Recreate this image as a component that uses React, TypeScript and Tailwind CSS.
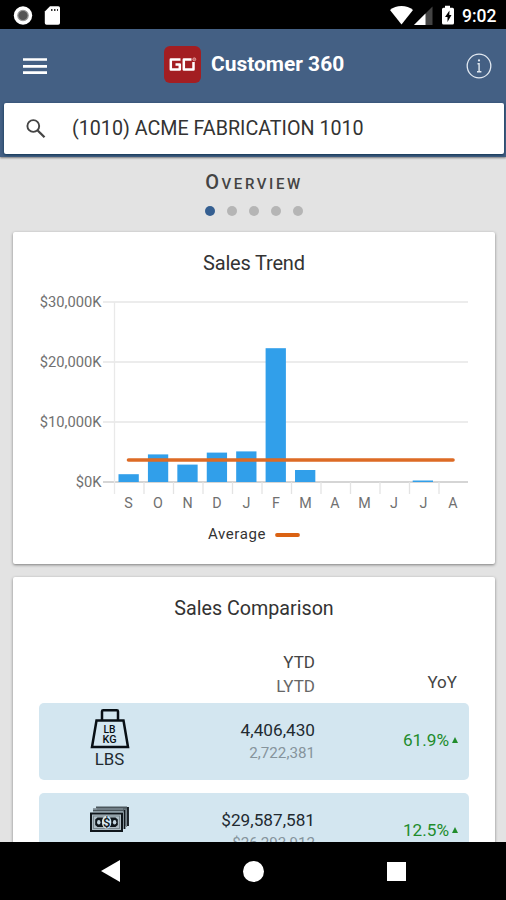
import React from 'react';

const months = ['S', 'O', 'N', 'D', 'J', 'F', 'M', 'A', 'M', 'J', 'J', 'A'];
const values = [1300, 4600, 2900, 4900, 5100, 22300, 2000, 0, 0, 0, 250, 0];
const ticks = [30000, 20000, 10000, 0];

const BAND = 29.5;
const LEFT = 101.5;
const BASE = 250;
const yFor = (v: number) => BASE - v * 0.006;

function StatusBar() {
  return (
    <div className="flex h-[29px] shrink-0 items-center bg-black pl-[13px] pr-[9px] text-white">
      <svg width="20" height="20" viewBox="0 0 20 20">
        <circle cx="10" cy="10.5" r="9.2" fill="#fff" />
        <circle cx="10" cy="10.5" r="5.2" fill="#555" stroke="#999" strokeWidth="1.2" />
      </svg>
      <svg className="ml-[11px]" width="17" height="20" viewBox="0 0 17 20">
        <path d="M6 1.200H14.300Q16 1.200 16 3V18Q16 19.800 14.200 19.800H2.600Q.8 19.800 .8 18V6.500Z" fill="#fff" />
        <path d="M7 5h1.500M10 5h1.500M13 5h1" stroke="#333" strokeWidth="2" />
      </svg>
      <svg className="ml-auto" width="23" height="20" viewBox="0 0 23 20">
        <path d="M0 5C6-.3 17-.3 23 5L11.500 19.500Z" fill="#fff" />
      </svg>
      <svg className="ml-[1px]" width="19" height="20" viewBox="0 0 19 20">
        <path d="M0 20L18.500 1.500V20Z" fill="#444" />
        <path d="M0 20L11.500 8.500V20Z" fill="#fff" />
      </svg>
      <svg className="ml-[8px]" width="14" height="20" viewBox="0 0 14 20">
        <path d="M4 .8h5v2h2.500Q13 2.800 13 4.300V18q0 1.500-1.500 1.500h-9Q1 19.500 1 18V4.300Q1 2.800 2.500 2.800H4Z" fill="#fff" />
        <path d="M8.500 5.500L4 12h2.500v5L10.500 10H8.300Z" fill="#000" />
      </svg>
      <span className="ml-[7px] mt-[2px] w-[35px] whitespace-nowrap text-[17.500px] font-medium leading-5">9:02</span>
    </div>
  );
}

function Header() {
  return (
    <header className="h-[128px] shrink-0 bg-[#446084] px-[3px] shadow-[0_1px_2px_rgba(0,0,0,0.45)]">
      <div className="flex h-[74px] items-center pl-[20px] pr-[11px]">
        <svg width="24" height="18" viewBox="0 0 24 18">
          <path d="M0 2.500h24M0 9.300h24M0 15.700h24" stroke="#fff" strokeWidth="2.700" />
        </svg>
        <div className="ml-[117px] mb-[3px] flex items-center">
          <svg width="37" height="37" viewBox="0 0 37 37">
            <rect width="37" height="37" rx="6" fill="#a31e22" />
            <path d="M16.500 13.400H6.800V23.600H15.800V18.500H11.500M27.500 13.400H19.800V23.600H29.500V16" fill="none" stroke="#fff" strokeWidth="2.500" strokeLinejoin="round" />
            <circle cx="30.300" cy="13.300" r="1.500" fill="#c66" stroke="#e3a6a6" strokeWidth=".8" />
          </svg>
          <h1 className="mb-[2px] ml-[10px] whitespace-nowrap text-[20.950px] font-bold leading-6 text-white">Customer 360</h1>
        </div>
        <svg className="ml-auto" width="26" height="26" viewBox="0 0 26 26" fill="none" stroke="#e2e9f1">
          <circle cx="13" cy="13" r="11.800" strokeWidth="1.300" />
          <path d="M11.500 10.700h1.600v8M11 18.700h4.400" strokeWidth="1.400" />
          <circle cx="13" cy="7.400" r="1.100" fill="#e2e9f1" stroke="none" />
        </svg>
      </div>
      <div className="-mr-px ml-px flex h-[51px] items-center rounded-[2px] bg-white pl-[21px] shadow-[0_1px_3px_#0b3150]">
        <svg width="22" height="22" viewBox="0 0 22 22" fill="none" stroke="#444">
          <circle cx="8.300" cy="8" r="5.900" strokeWidth="1.900" />
          <path d="M12.700 12.500L19.500 19.300" strokeWidth="2.300" />
        </svg>
        <span className="ml-[25px] whitespace-nowrap text-[19.700px] leading-6 text-[#333]">(1010) ACME FABRICATION 1010</span>
      </div>
    </header>
  );
}

function TrendChart() {
  return (
    <svg className="block" width="482" height="332" viewBox="0 0 482 332" fontFamily="Roboto, sans-serif">
      <text x="241" y="38" textAnchor="middle" fontSize="20" textLength="102" fill="#333">Sales Trend</text>
      {ticks.map((t) => (
        <g key={t}>
          <path d={`M90 ${yFor(t)}H455`} stroke={t === 0 ? '#d5d5d5' : '#ececec'} strokeWidth="2" />
          <text x="88.500" y={yFor(t) + 4.500} textAnchor="end" fontSize="14.700" fill="#707070">{`$${t ? t.toLocaleString('en-US') : 0}K`}</text>
        </g>
      ))}
      <path d="M101.500 70V262" stroke="#e9e9e9" strokeWidth="1.300" />
      {months.map((m, i) => (
        <g key={i}>
          {i > 0 && <path d={`M${LEFT + i * BAND} 250v12`} stroke="#e3e3e3" strokeWidth="1.300" />}
          <rect x={LEFT + i * BAND + 4 - i * 0.08} y={yFor(values[i])} width="20.300" height={BASE - yFor(values[i])} fill="#319fea" />
          <text x={LEFT + i * BAND + 14} y="275.500" textAnchor="middle" fontSize="14.300" fill="#707070">{m}</text>
        </g>
      ))}
      <path d="M115.500 228H440" stroke="#dd6b25" strokeWidth="3.600" strokeLinecap="round" />
      <text x="195" y="307" fontSize="15" textLength="57.500" fill="#333">Average</text>
      <path d="M264 303H285" stroke="#da6213" strokeWidth="3.800" strokeLinecap="round" />
    </svg>
  );
}

function WeightIcon() {
  return (
    <svg width="40" height="40" viewBox="0 0 40 40">
      <path d="M12 11.500V2.500Q12 1.300 13.200 1.300h13.600Q28 1.300 28 2.500v9M6.500 11.500h27L38 38H2Z" fill="none" stroke="#080f15" strokeWidth="2.500" />
      <g fill="#080f15" fontFamily="Roboto, sans-serif" fontSize="11" fontWeight="500" textAnchor="middle">
        <text x="19.500" y="23.500" textLength="12" lengthAdjust="spacingAndGlyphs">LB</text>
        <text x="19.500" y="34" textLength="14" lengthAdjust="spacingAndGlyphs">KG</text>
      </g>
    </svg>
  );
}

function MoneyIcon() {
  return (
    <svg className="mt-[7px]" width="40" height="27" viewBox="0 0 40 27">
      <path d="M7 1h31v19h-3V4H7Z" fill="#69767d" />
      <path d="M38 1V20M34.500 4V23" fill="none" stroke="#10171c" strokeWidth="1.800" />
      <path d="M6 1.500H37M3 4.500H34" stroke="#4b565c" strokeWidth="1.800" />
      <path d="M3 3h30M36.300 4v17" stroke="#7a878e" strokeWidth="1.500" />
      <rect x="1" y="7.500" width="31" height="17.500" fill="#aebdc5" stroke="#10171c" strokeWidth="2" />
      <rect x="3.500" y="10" width="26" height="12.500" fill="none" stroke="#7b8990" strokeWidth="1" />
      <path d="M7.500 11.500H25.500L27.800 13.500V19L25.500 21H7.500L5.200 19V13.500Z" fill="#10171c" />
      <ellipse cx="8.800" cy="16.200" rx="1.700" ry="2.300" fill="#c3d5df" />
      <ellipse cx="24.600" cy="16.200" rx="1.700" ry="2.300" fill="#c3d5df" />
      <ellipse cx="16.600" cy="16.200" rx="4.700" ry="6.500" fill="#d4e7f1" />
      <text x="16.600" y="20.800" textAnchor="middle" fontFamily="Roboto, sans-serif" fontSize="13" fontWeight="500" fill="#10171c">$</text>
    </svg>
  );
}

interface RowProps {
  icon: React.ReactNode;
  label: string;
  current: string;
  previous: string;
  change: string;
}

function ComparisonRow({ icon, label, current, previous, change }: RowProps) {
  return (
    <div className="grid h-[77px] grid-cols-[141px_135px_143px] rounded-[5px] bg-[#d3e6f0]">
      <div className="flex flex-col items-center pt-[6px]">
        {icon}
        <span className="text-[16.800px] leading-5 text-[#222b31]">{label}</span>
      </div>
      <div className="flex flex-col items-end pt-[15px]">
        <span className="text-[17.200px] leading-6 text-[#222a30]">{current}</span>
        <span className="mt-px text-[15.200px] leading-[21px] text-[#86949c]">{previous}</span>
      </div>
      <div className="flex items-center justify-end pb-[3px] text-[#218c2c]">
        <span className="text-[17.200px] leading-6">{change}</span>
        <svg className="ml-[3px]" width="6" height="6" viewBox="0 0 6 6"><path d="M3 0L6 6H0Z" fill="currentColor" /></svg>
      </div>
    </div>
  );
}

export default function App() {
  return (
    <div className="flex h-[900px] w-[506px] flex-col overflow-hidden bg-[#e3e3e3] font-['Roboto',sans-serif]">
      <StatusBar />
      <Header />
      <main className="min-h-0 flex-1 overflow-hidden pl-[13px] pr-[11px]">
        <div className="flex h-[75px] flex-col items-center pt-[13px]">
          <h2 className="whitespace-nowrap text-[15px] font-medium leading-6 tracking-[2.600px] text-[#444]">
            <span className="text-[20px]">O</span>VERVIEW
          </h2>
          <div className="mt-[10px] flex gap-[12px]">
            <i className="size-[10px] rounded-full bg-[#355f91]" />
            <i className="size-[10px] rounded-full bg-[#b5b5b5]" />
            <i className="size-[10px] rounded-full bg-[#b5b5b5]" />
            <i className="size-[10px] rounded-full bg-[#b5b5b5]" />
            <i className="size-[10px] rounded-full bg-[#b5b5b5]" />
          </div>
        </div>
        <section className="h-[332px] rounded-[2px] bg-white shadow-[0_1px_3px_rgba(0,0,0,0.45)]">
          <TrendChart />
        </section>
        <section className="mt-[13px] h-[400px] rounded-[2px] bg-white px-[26px] pt-[20px] shadow-[0_1px_3px_rgba(0,0,0,0.45)]">
          <h3 className="text-center text-[19.700px] leading-6 text-[#333]">Sales Comparison</h3>
          <div className="grid h-[82px] grid-cols-[276px_142px] text-right text-[17px] leading-6 text-[#444]">
            <div className="pt-[29px]">
              <div>YTD</div>
              <div className="text-[#666]">LYTD</div>
            </div>
            <div className="pt-[49px]">YoY</div>
          </div>
          <div className="flex w-[430px] flex-col gap-[13px]">
            <ComparisonRow icon={<WeightIcon />} label="LBS" current="4,406,430" previous="2,722,381" change="61.9%" />
            <ComparisonRow icon={<MoneyIcon />} label="" current="$29,587,581" previous="$26,293,912" change="12.5%" />
          </div>
        </section>
      </main>
      <nav className="grid h-[58px] shrink-0 grid-cols-[221px_65px_220px] items-center bg-black">
        <svg className="justify-self-center" width="20" height="22" viewBox="0 0 20 22"><path d="M0 11L19 0V22Z" fill="#fff" /></svg>
        <i className="size-[21px] justify-self-center rounded-full bg-white" />
        <i className="size-[19px] justify-self-center bg-white" />
      </nav>
    </div>
  );
}
